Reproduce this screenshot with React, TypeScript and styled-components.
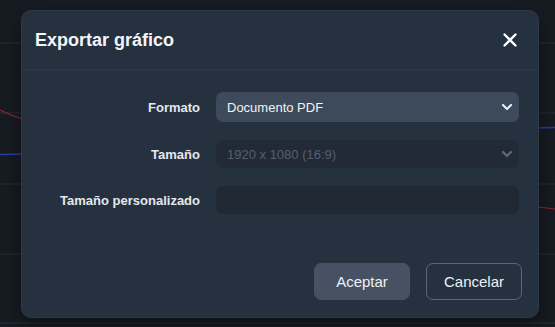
import React from 'react';
import styled, { createGlobalStyle } from 'styled-components';

const GlobalStyle = createGlobalStyle`
  html, body {
    margin: 0;
    padding: 0;
    background: #171c23;
    font-family: "Liberation Sans", Arial, sans-serif;
  }
  * { box-sizing: border-box; }
`;

const Page = styled.div`
  position: relative;
  width: 555px;
  height: 327px;
  overflow: hidden;
  background: #171c23;
`;

const ChartLayer = styled.svg`
  display: block;
  width: 555px;
  height: 327px;
`;

const Overlay = styled.div`
  position: absolute;
  inset: 0;
  padding: 10px 16px 9px 21px;
  display: flex;
  align-items: flex-start;
`;

const Dialog = styled.div`
  width: 518px;
  height: 308px;
  background: #263140;
  border: 1px solid #2e3947;
  border-radius: 10px;
  box-shadow: 0 8px 24px rgba(0, 0, 0, 0.45);
  display: flex;
  flex-direction: column;
`;

const Header = styled.div`
  height: 59px;
  padding: 0 18px 0 13px;
  display: flex;
  align-items: center;
  justify-content: space-between;
  border-bottom: 1px solid #303b49;
`;

const Title = styled.h2`
  margin: 0;
  font-size: 18px;
  font-weight: 700;
  color: #f3f5f8;
  letter-spacing: 0;
`;

const CloseButton = styled.button`
  width: 20px;
  height: 20px;
  padding: 0;
  border: none;
  background: transparent;
  display: flex;
  align-items: center;
  justify-content: center;
  cursor: pointer;
`;

const Body = styled.div`
  flex: 1;
  padding: 22px 19px 0 0;
  display: flex;
  flex-direction: column;
  gap: 18px;
`;

const Row = styled.div`
  display: grid;
  grid-template-columns: 178px 1fr;
  column-gap: 16px;
  align-items: center;
`;

const Label = styled.label`
  text-align: right;
  font-size: 13px;
  font-weight: 700;
  color: #e4e8ee;
`;

const SelectWrap = styled.div`
  position: relative;
`;

const Select = styled.select<{ $h: number }>`
  appearance: none;
  width: 100%;
  height: ${p => p.$h}px;
  padding: 0 30px 0 11px;
  border: none;
  border-radius: 7px;
  font-family: inherit;
  font-size: 13px;
  background: ${p => (p.disabled ? '#202833' : '#3d4a5c')};
  color: ${p => (p.disabled ? '#677383' : '#f1f3f6')};
  outline: none;
`;

const Chevron = styled.svg`
  position: absolute;
  right: 5px;
  top: 50%;
  transform: translateY(-50%);
  pointer-events: none;
`;

const TextInput = styled.input`
  width: 100%;
  height: 28px;
  border: none;
  border-radius: 7px;
  background: #202833;
  color: #e4e8ee;
  padding: 0 11px;
  font-family: inherit;
  font-size: 13px;
  outline: none;
`;

const Footer = styled.div`
  padding: 0 16px 17px 0;
  display: flex;
  justify-content: flex-end;
  gap: 16px;
`;

const Button = styled.button<{ $variant: 'primary' | 'outline' }>`
  width: 96px;
  height: 37px;
  border-radius: 7px;
  font-family: inherit;
  font-size: 15px;
  color: #eef1f5;
  cursor: pointer;
  background: ${p => (p.$variant === 'primary' ? '#465264' : 'transparent')};
  border: 1px solid ${p => (p.$variant === 'primary' ? '#465264' : '#5b6778')};
`;

const ChevronIcon = ({ color }: { color: string }) => (
  <Chevron width="14" height="14" viewBox="0 0 14 14">
    <path d="M3 5l4 4 4-4" fill="none" stroke={color} strokeWidth="2.2" strokeLinecap="round" strokeLinejoin="round" />
  </Chevron>
);

const gridRows = [43, 113, 184, 254, 323];

const Chart = () => (
  <ChartLayer viewBox="0 0 555 327">
    {gridRows.map(y => (
      <line key={y} x1="0" x2="555" y1={y} y2={y} stroke="#2a3038" strokeWidth="1" />
    ))}
    <path d="M0 154.5 L200 150 L400 132 L555 127.5" fill="none" stroke="#2b3ea6" strokeWidth="1.5" />
    <path d="M0 110 Q12 116 24 119.5 L300 180 L555 209" fill="none" stroke="#8e2a2e" strokeWidth="1.2" />
  </ChartLayer>
);

const App: React.FC = () => {
  return (
    <Page>
      <GlobalStyle />
      <Chart />
      <Overlay>
        <Dialog>
          <Header>
            <Title>Exportar gráfico</Title>
            <CloseButton aria-label="Cerrar">
              <svg width="16" height="16" viewBox="0 0 16 16">
                <path d="M2.5 2.5l11 11M13.5 2.5l-11 11" stroke="#ffffff" strokeWidth="2.3" strokeLinecap="round" />
              </svg>
            </CloseButton>
          </Header>
          <Body>
            <Row>
              <Label>Formato</Label>
              <SelectWrap>
                <Select $h={30} defaultValue="pdf">
                  <option value="png">Imagen PNG</option>
                  <option value="pdf">Documento PDF</option>
                </Select>
                <ChevronIcon color="#e8ecf1" />
              </SelectWrap>
            </Row>
            <Row>
              <Label>Tamaño</Label>
              <SelectWrap>
                <Select $h={28} disabled defaultValue="1080">
                  <option value="1080">1920 x 1080 (16:9)</option>
                </Select>
                <ChevronIcon color="#5f6b7a" />
              </SelectWrap>
            </Row>
            <Row>
              <Label>Tamaño personalizado</Label>
              <TextInput type="text" />
            </Row>
          </Body>
          <Footer>
            <Button $variant="primary">Aceptar</Button>
            <Button $variant="outline">Cancelar</Button>
          </Footer>
        </Dialog>
      </Overlay>
    </Page>
  );
};

export default App;
